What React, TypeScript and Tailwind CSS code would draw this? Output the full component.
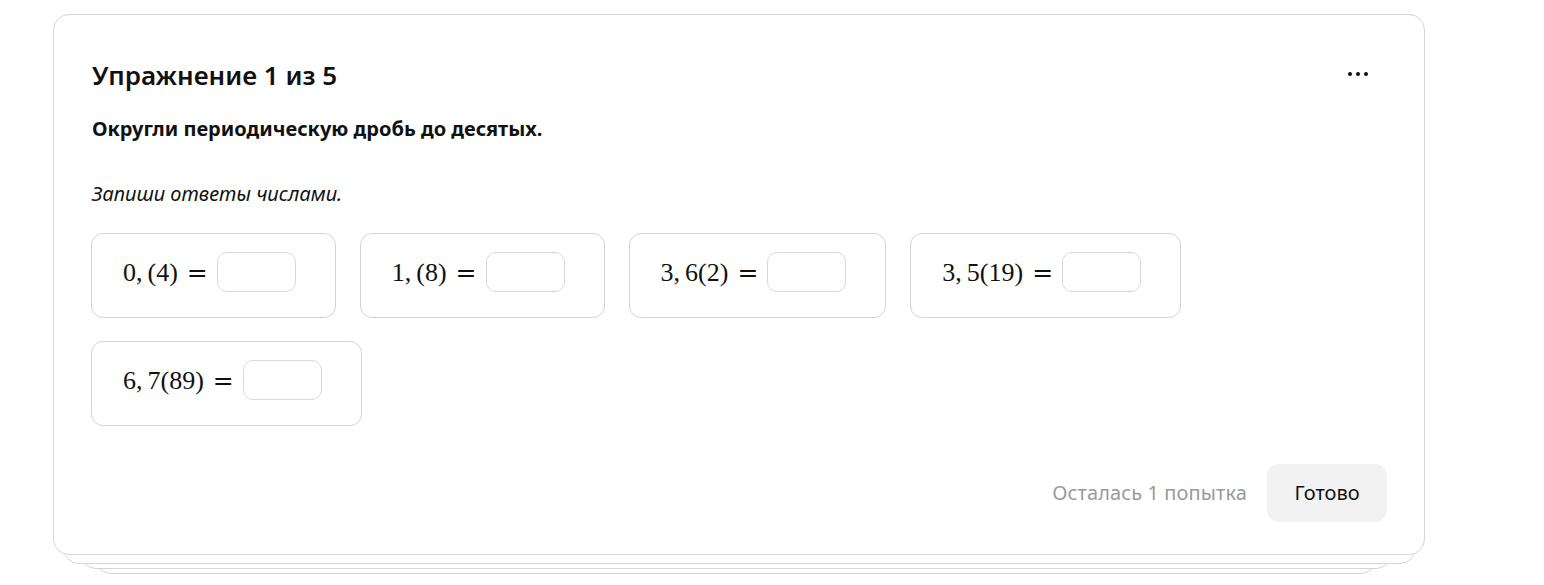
import React from "react";

const items = [
  { a: "0", b: "(4)" },
  { a: "1", b: "(8)" },
  { a: "3", b: "6(2)" },
  { a: "3", b: "5(19)" },
  { a: "6", b: "7(89)" },
];

function Exercise({ a, b }: { a: string; b: string }) {
  return (
    <div className="flex items-center rounded-[12px] border border-[#d4d4d4] bg-white pl-[31px] pr-[39px] pt-[18px] pb-[25px]">
      <span className="font-['Liberation_Serif',serif] text-[26px] leading-[39px] text-[#111] whitespace-nowrap">
        {a},<span className="ml-[5px]">{b}</span>
      </span>
      <span className="ml-[9px] mr-[9px] font-['DejaVu_Serif',serif] text-[25px] leading-[39px] text-[#111]">=</span>
      <div className="h-[40px] w-[79px] rounded-[10px] border border-[#d9d9d9] bg-white" />
    </div>
  );
}

export default function App() {
  return (
    <div className="min-h-[585px] w-[1544px] bg-white font-['Noto_Sans',sans-serif] text-[#111]">
      <div className="pl-[53px] pt-[14px]">
        <div className="relative w-[1372px]">
          {/* stacked layers behind */}
          <div className="absolute left-[42px] right-[48px] top-[40px] bottom-[-19px] rounded-[16px] border border-[#d6d6d6] bg-white" />
          <div className="absolute left-[27px] right-[33px] top-[30px] bottom-[-14px] rounded-[16px] border border-[#d6d6d6] bg-white" />
          <div className="absolute left-[10px] right-[9px] top-[20px] bottom-[-9px] rounded-[16px] border border-[#d6d6d6] bg-white" />
          <div className="relative h-[541px] rounded-[16px] border border-[#d6d6d6] bg-white pl-[38px] pr-[37px] pt-[44px]">
            <div className="flex items-start justify-between">
              <h1 className="text-[26px] font-semibold leading-[32px]">Упражнение 1 из 5</h1>
              <div className="mt-[13px] mr-[19px] flex gap-[4px]">
                <span className="h-[4px] w-[4px] rounded-full bg-[#111]" />
                <span className="h-[4px] w-[4px] rounded-full bg-[#111]" />
                <span className="h-[4px] w-[4px] rounded-full bg-[#111]" />
              </div>
            </div>
            <p className="mt-[25px] text-[20px] font-bold leading-[26px]">Округли периодическую дробь до десятых.</p>
            <p className="mt-[39px] text-[20px] italic leading-[26px]">Запиши ответы числами.</p>
            <div className="-ml-[1px] mt-[26px] flex w-[1110px] flex-wrap gap-x-[24px] gap-y-[23px]">
              {items.map((it, i) => (
                <Exercise key={i} a={it.a} b={it.b} />
              ))}
            </div>
            <div className="mt-[38px] flex items-center justify-end gap-[20px]">
              <span className="text-[20px] tracking-[0.1px] text-[#9a9a9a]">Осталась 1 попытка</span>
              <button className="h-[58px] w-[120px] rounded-[12px] bg-[#f2f2f2] text-[20px] text-[#111]">Готово</button>
            </div>
          </div>
        </div>
      </div>
    </div>
  );
}
